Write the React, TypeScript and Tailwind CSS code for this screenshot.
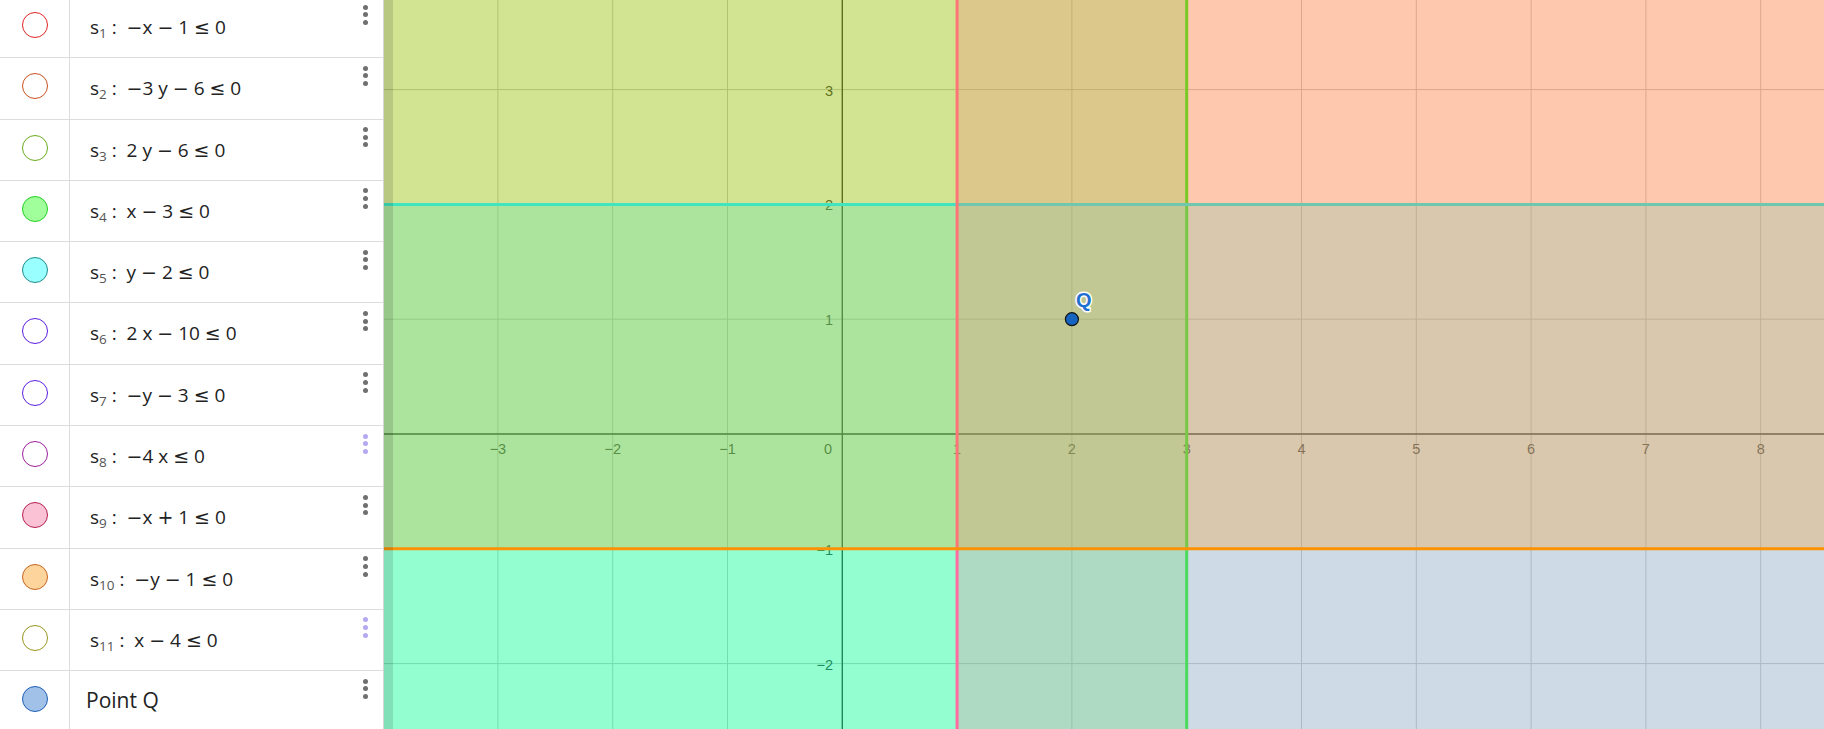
import React from "react";

type Row = {
  sub?: string;
  expr?: string;
  text?: string;
  stroke: string;
  fill: string;
  dots?: string;
};

const rows: Row[] = [
  { sub: "1", expr: "−x − 1 ≤ 0", stroke: "#e02424", fill: "#ffffff" },
  { sub: "2", expr: "−3 y − 6 ≤ 0", stroke: "#c8501e", fill: "#ffffff" },
  { sub: "3", expr: "2 y − 6 ≤ 0", stroke: "#6aaa1e", fill: "#ffffff" },
  { sub: "4", expr: "x − 3 ≤ 0", stroke: "#22d022", fill: "#a0ff9a" },
  { sub: "5", expr: "y − 2 ≤ 0", stroke: "#1f8c8c", fill: "#99ffff" },
  { sub: "6", expr: "2 x − 10 ≤ 0", stroke: "#5a1ee0", fill: "#ffffff" },
  { sub: "7", expr: "−y − 3 ≤ 0", stroke: "#5a1ee0", fill: "#ffffff" },
  { sub: "8", expr: "−4 x ≤ 0", stroke: "#9c1e9c", fill: "#ffffff", dots: "#b3aaf0" },
  { sub: "9", expr: "−x + 1 ≤ 0", stroke: "#b4204e", fill: "#fbc2d6" },
  { sub: "10", expr: "−y − 1 ≤ 0", stroke: "#c8641e", fill: "#fdd59c" },
  { sub: "11", expr: "x − 4 ≤ 0", stroke: "#96961e", fill: "#ffffff", dots: "#b3aaf0" },
  { text: "Point Q", stroke: "#1d5fb4", fill: "#a2c1e8" },
];

// graph geometry, in svg-local px
const W = 1440;
const H = 729;
const ox = 458.3;
const oy = 434;
const u = 114.8;
const X = (v: number) => ox + v * u;
const Y = (v: number) => oy - v * u;

const GREEN = "rgb(20,255,12)";
const CYAN = "rgb(0,255,255)";
const PINK = "rgb(255,107,159)";
const ORANGE = "rgb(251,146,3)";

// operators get the wider math-style glyphs
const Formula = ({ expr }: { expr: string }) => (
  <>
    {expr.split("").map((ch, i) =>
      "−+≤".includes(ch) ? (
        <span key={i} className="font-['DejaVu_Sans',sans-serif] text-[19px]">
          {ch}
        </span>
      ) : (
        <span key={i}>{ch}</span>
      )
    )}
  </>
);

const AlgebraRow = ({ row }: { row: Row }) => {
  return (
    <div className="flex h-[61.3px] shrink-0 border-b border-[#dcdcdc]">
      {/* visibility toggle */}
      <div className="flex w-[70px] shrink-0 justify-center border-r border-[#dcdcdc] pt-[15px]">
        <div
          className="size-[26px] rounded-full border-[1.4px]"
          style={{ borderColor: row.stroke, backgroundColor: row.fill }}
        />
      </div>

      <div className="flex-1 pl-[20px] pt-[19px] font-['Open_Sans','DejaVu_Sans',sans-serif] text-[#222]">
        {row.text ? (
          <span className="-ml-[4px] text-[21px] leading-[20px]">{row.text}</span>
        ) : (
          <span className="whitespace-pre text-[19px] leading-[20px]">
            s
            <span className="relative top-[4px] text-[13.5px] text-[#555]">{row.sub}</span>
            {" :  "}
            <Formula expr={row.expr ?? ""} />
          </span>
        )}
      </div>

      {/* row menu */}
      <div className="flex w-[36px] shrink-0 flex-col items-center gap-[2.7px] pt-[7.5px]">
        {[0, 1, 2].map((i) => (
          <span
            key={i}
            className="size-[5px] rounded-full"
            style={{ backgroundColor: row.dots ?? "#707070" }}
          />
        ))}
      </div>
    </div>
  );
};

const Graph = () => {
  const xs = Array.from({ length: 14 }, (_, i) => i - 4);
  const ys = Array.from({ length: 8 }, (_, i) => i - 3);
  const xLabels = [-3, -2, -1, 1, 2, 3, 4, 5, 6, 7, 8];
  const yLabels = [3, 2, 1, -1, -2];
  const fmt = (n: number) => (n < 0 ? `−${-n}` : `${n}`);

  return (
    <svg width={W} height={H} className="block">
      <rect width={W} height={H} fill="#ffffff" />

      {/* grid */}
      {xs.map((i) => (
        <line key={`gx${i}`} x1={X(i)} x2={X(i)} y1={0} y2={H} stroke="#c4c4c4" strokeWidth={1} />
      ))}
      {ys.map((j) => (
        <line key={`gy${j}`} x1={0} x2={W} y1={Y(j)} y2={Y(j)} stroke="#c4c4c4" strokeWidth={1} />
      ))}

      {/* axes */}
      <line x1={0} x2={W} y1={oy} y2={oy} stroke="#252525" strokeWidth={1.3} />
      <line x1={ox} x2={ox} y1={0} y2={H} stroke="#252525" strokeWidth={1.3} />

      <g fontFamily="'Liberation Sans', Arial, sans-serif" fontSize={14.5} fill="#333">
        {xLabels.map((i) => (
          <text key={`lx${i}`} x={X(i)} y={oy + 20} textAnchor="middle">
            {fmt(i)}
          </text>
        ))}
        <text x={444} y={oy + 20} textAnchor="middle">
          0
        </text>
        {yLabels.map((j) => (
          <text key={`ly${j}`} x={449} y={Y(j) + 6} textAnchor="end">
            {fmt(j)}
          </text>
        ))}
      </g>

      {/* s4: x ≤ 3 */}
      <rect x={0} y={0} width={X(3)} height={H} fill={GREEN} fillOpacity={0.25} />
      <line x1={X(3)} x2={X(3)} y1={0} y2={H} stroke={GREEN} strokeWidth={3} />

      {/* s5: y ≤ 2 */}
      <rect x={0} y={Y(2)} width={W} height={H - Y(2)} fill={CYAN} fillOpacity={0.25} />
      <line x1={0} x2={W} y1={Y(2)} y2={Y(2)} stroke={CYAN} strokeWidth={3} />

      {/* s9: x ≥ 1 */}
      <rect x={X(1)} y={0} width={W - X(1)} height={H} fill={PINK} fillOpacity={0.25} />
      <line x1={X(1)} x2={X(1)} y1={0} y2={H} stroke={PINK} strokeWidth={3} />

      {/* s10: y ≥ -1 */}
      <rect x={0} y={0} width={W} height={Y(-1)} fill={ORANGE} fillOpacity={0.25} />
      <line x1={0} x2={W} y1={Y(-1)} y2={Y(-1)} stroke={ORANGE} strokeWidth={3} />

      {/* point Q */}
      <circle cx={X(2)} cy={Y(1)} r={6.5} fill="#1565c0" stroke="#111" strokeWidth={1.2} />
      <text
        x={X(2) + 4}
        y={Y(1) - 12}
        fontFamily="'Liberation Sans', Arial, sans-serif"
        fontSize={20}
        fontWeight={700}
        fill="#1e6fd0"
        stroke="#ffffff"
        strokeWidth={3}
        paintOrder="stroke"
      >
        Q
      </text>
    </svg>
  );
};

export default function App() {
  return (
    <div className="flex h-[729px] w-[1824px] overflow-hidden bg-white">
      <aside className="flex w-[384px] shrink-0 flex-col overflow-hidden border-r border-[#d6d6d6] bg-white">
        <div className="-mt-[3px] flex flex-col">
          {rows.map((row, i) => (
            <AlgebraRow key={i} row={row} />
          ))}
        </div>
      </aside>

      <main className="relative flex-1 overflow-hidden">
        <Graph />
        {/* panel edge shadow */}
        <div className="absolute left-0 top-0 h-full w-[9px] bg-black/[0.12]" />
      </main>
    </div>
  );
}
